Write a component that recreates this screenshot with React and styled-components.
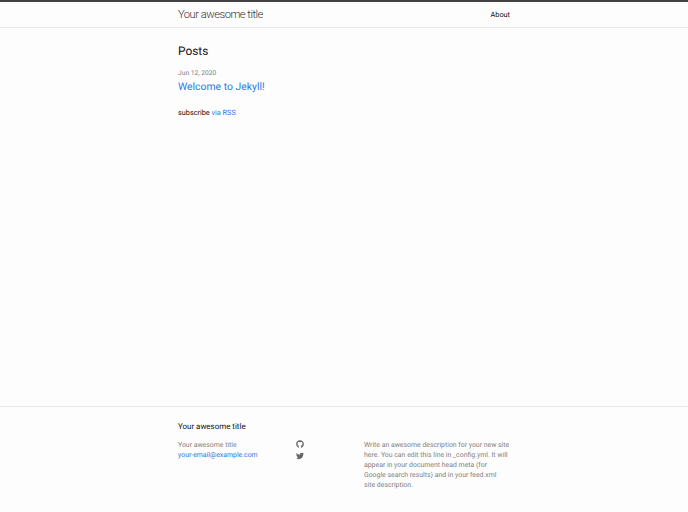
import React from "react";
import styled, { createGlobalStyle } from "styled-components";
import { FaGithub, FaTwitter } from "react-icons/fa";

const Global = createGlobalStyle`
  html, body { margin: 0; padding: 0; background: #fdfdfd; }
  body { font-family: Roboto, "Liberation Sans", Arial, sans-serif; color: #111; font-size: 7.3px; line-height: 12px; text-rendering: geometricPrecision; }
  a { text-decoration: none; color: #2a7ae2; }
`;
const Page = styled.div`
  height: 512px;
  display: flex;
  flex-direction: column;
  overflow: hidden;
`;
const Wrapper = styled.div`
  width: 332px;
  margin: 0 auto;
`;
const Header = styled.header`
  height: 25px;
  border-top: 2px solid #424242;
  border-bottom: 1px solid #e8e8e8;
  flex: none;
`;
const HeaderRow = styled(Wrapper)`
  display: flex;
  justify-content: space-between;
  align-items: center;
  height: 25px;
`;
const SiteTitle = styled.a`
  font-size: 11.2px;
  font-weight: 300;
  letter-spacing: -0.5px;
  color: #333;
`;
const NavLink = styled.a`
  font-size: 7.3px;
  color: #111;
`;
const Main = styled.main`
  flex: 1;
  padding-top: 14px;
`;
const PageHeading = styled.h1`
  margin: 0 0 7px;
  font-size: 11.9px;
  line-height: 18px;
  font-weight: 400;
`;
const PostMeta = styled.div`
  font-size: 6.7px;
  line-height: 12px;
  color: #828282;
`;
const PostTitle = styled.a`
  display: block;
  font-size: 10.4px;
  line-height: 15px;
  margin-bottom: 13px;
`;
const Subscribe = styled.p`
  margin: 0;
  font-size: 7.3px;
  line-height: 12px;
`;
const Footer = styled.footer`
  flex: none;
  height: 106px;
  border-top: 1px solid #e8e8e8;
  padding-top: 13px;
  box-sizing: border-box;
`;
const FooterHeading = styled.h2`
  margin: 0 0 7px;
  font-size: 7.95px;
  line-height: 13px;
  font-weight: 400;
`;
const Columns = styled.div`
  display: grid;
  grid-template-columns: 118px 68px 146px;
  font-size: 6.9px;
  line-height: 10px;
  color: #828282;
`;
const Social = styled.div`
  display: flex;
  flex-direction: column;
  gap: 4px;
  color: #666;
  font-size: 8px;
  svg { display: block; }
`;
const Plain = styled.div``;

export default function App() {
  return (
    <Page>
      <Global />
      <Header>
        <HeaderRow>
          <SiteTitle href="#">Your awesome title</SiteTitle>
          <NavLink href="#">About</NavLink>
        </HeaderRow>
      </Header>
      <Main>
        <Wrapper>
          <PageHeading>Posts</PageHeading>
          <PostMeta>Jun 12, 2020</PostMeta>
          <PostTitle href="#">Welcome to Jekyll!</PostTitle>
          <Subscribe>subscribe <a href="#">via RSS</a></Subscribe>
        </Wrapper>
      </Main>
      <Footer>
        <Wrapper>
          <FooterHeading>Your awesome title</FooterHeading>
          <Columns>
            <Plain>
              <div>Your awesome title</div>
              <a href="#">your-email@example.com</a>
            </Plain>
            <Social>
              <FaGithub />
              <FaTwitter />
            </Social>
            <Plain>
              Write an awesome description for your new site here. You can edit this line in _config.yml. It will appear in your document head meta (for Google search results) and in your feed.xml<br />site description.
            </Plain>
          </Columns>
        </Wrapper>
      </Footer>
    </Page>
  );
}
